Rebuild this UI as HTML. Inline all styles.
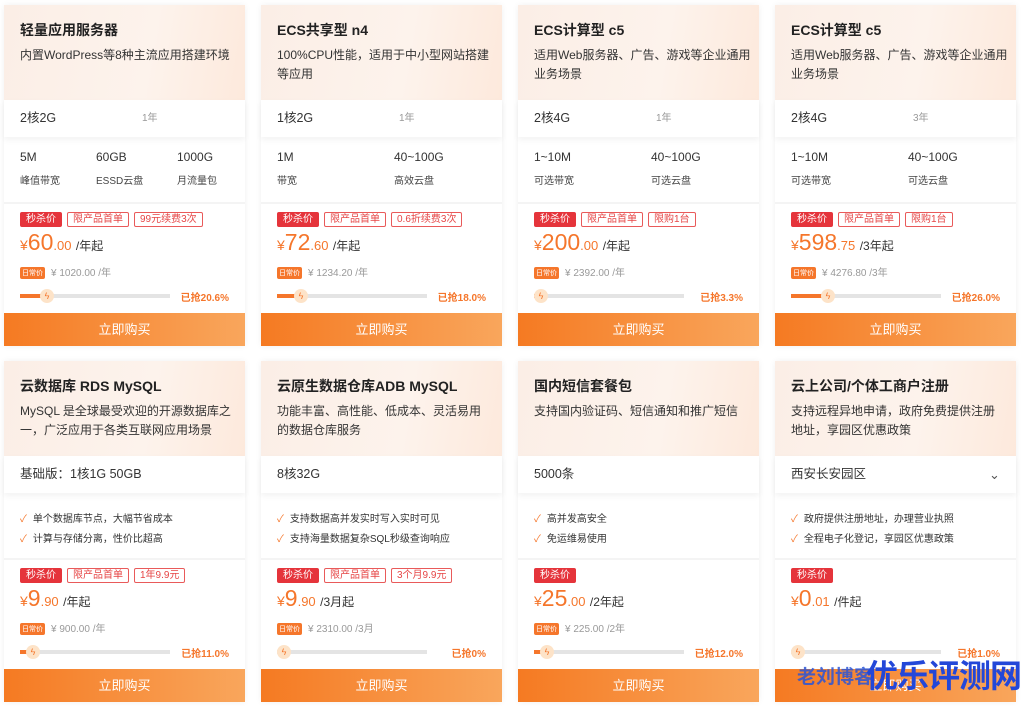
<!DOCTYPE html><html><head><meta charset="utf-8"><style>
*{margin:0;padding:0;box-sizing:border-box}
body{width:1024px;height:706px;background:#fff;font-family:"Liberation Sans","Noto Sans CJK SC",sans-serif;position:relative;overflow:hidden;color:#222}
.c{position:absolute;width:241px;height:341px;background:#fff;box-shadow:0 0 6px rgba(0,0,0,.06)}
.h{position:absolute;left:0;top:0;width:241px;height:95px;background:linear-gradient(100deg,#fbeee6 0%,#fdf3ec 60%,#fde9dc 100%)}
.t{position:absolute;left:16px;top:15px;font-size:14px;font-weight:bold;color:#222;white-space:nowrap}
.d{position:absolute;left:16px;top:41px;width:222px;font-size:12px;line-height:19px;color:#333}
.s{position:absolute;left:0;top:95px;width:241px;height:37px;background:#fff;box-shadow:0 3px 6px rgba(0,0,0,.05);font-size:12.5px;line-height:37px;padding-left:16px;color:#333}
.s i{font-style:normal;position:absolute;left:138px;font-size:10px;color:#999}
.v{position:absolute;top:145px;font-size:12px;color:#333}
.l{position:absolute;top:167px;font-size:10px;color:#444}
.ck{position:absolute;left:16px;font-size:10px;color:#333;white-space:nowrap}
.ck b{color:#f5762b;font-weight:normal;margin-right:6px}
.sep{position:absolute;left:0;top:197px;width:241px;height:2px;background:#f4f4f4}
.tg{position:absolute;top:207px;left:16px;display:flex;gap:5px}
.tg span{font-size:10px;height:15px;line-height:13px;padding:0 5px;border:1px solid #e95a5a;color:#e64545;border-radius:2px;background:#fff}
.tg span.r{background:#e5343b;color:#fff;border-color:#e5343b}
.p{position:absolute;left:16px;top:224px;color:#f5762b;white-space:nowrap}
.p .y{font-size:14px}.p .n{font-size:23px}.p .f{font-size:13px}.p .u{font-size:12px;color:#333}
.o{position:absolute;left:16px;top:259px;font-size:10px;color:#999;white-space:nowrap}
.o b{display:inline-block;background:#f5762b;color:#fff;font-size:7px;font-weight:normal;padding:1px 2px;border-radius:2px;margin-right:6px;vertical-align:1px}
.bar{position:absolute;left:16px;top:289px;width:150px;height:4px;background:#e4e4e4}
.bar em{position:absolute;left:0;top:0;height:4px;background:#f5762b}
.bar u{position:absolute;top:-5px;width:14px;height:14px;border-radius:50%;background:#fde3c8;color:#f5762b;font-size:9px;line-height:14px;text-align:center;text-decoration:none}
.pc{position:absolute;right:16px;top:284px;font-size:10px;color:#f5762b;font-weight:bold}
.btn{position:absolute;left:0;top:308px;width:241px;height:33px;background:linear-gradient(90deg,#f57a22,#f9a65c);color:#fff;font-size:13px;text-align:center;line-height:33px}
.wm{position:absolute;left:797px;top:662px;font-size:19px;color:#2a55d8;font-weight:bold;opacity:.85;white-space:nowrap}
.wm2{position:absolute;left:866px;top:656px;font-size:32px;line-height:40px;color:#2347d8;font-weight:bold;letter-spacing:-1px;white-space:nowrap}
</style></head><body>

<div class="c" style="left:4px;top:5px"><div class="h"></div><div class="t">轻量应用服务器</div><div class="d">内置WordPress等8种主流应用搭建环境</div>
<div class="s">2核2G<i>1年</i></div>
<div class="v" style="left:16px">5M</div><div class="v" style="left:92px">60GB</div><div class="v" style="left:173px">1000G</div>
<div class="l" style="left:16px">峰值带宽</div><div class="l" style="left:92px">ESSD云盘</div><div class="l" style="left:173px">月流量包</div>
<div class="sep"></div><div class="tg"><span class="r">秒杀价</span><span>限产品首单</span><span>99元续费3次</span></div>
<div class="p"><span class="y">¥</span><span class="n">60</span><span class="f">.00</span> <span class="u">/年起</span></div>
<div class="o"><b>日常价</b>¥ 1020.00 /年</div>
<div class="bar"><em style="width:20%"></em><u style="left:20px">ϟ</u></div><div class="pc">已抢20.6%</div><div class="btn">立即购买</div></div>

<div class="c" style="left:261px;top:5px"><div class="h"></div><div class="t">ECS共享型 n4</div><div class="d">100%CPU性能，适用于中小型网站搭建等应用</div>
<div class="s">1核2G<i>1年</i></div>
<div class="v" style="left:16px">1M</div><div class="v" style="left:133px">40~100G</div>
<div class="l" style="left:16px">带宽</div><div class="l" style="left:133px">高效云盘</div>
<div class="sep"></div><div class="tg"><span class="r">秒杀价</span><span>限产品首单</span><span>0.6折续费3次</span></div>
<div class="p"><span class="y">¥</span><span class="n">72</span><span class="f">.60</span> <span class="u">/年起</span></div>
<div class="o"><b>日常价</b>¥ 1234.20 /年</div>
<div class="bar"><em style="width:18%"></em><u style="left:17px">ϟ</u></div><div class="pc">已抢18.0%</div><div class="btn">立即购买</div></div>

<div class="c" style="left:518px;top:5px"><div class="h"></div><div class="t">ECS计算型 c5</div><div class="d">适用Web服务器、广告、游戏等企业通用业务场景</div>
<div class="s">2核4G<i>1年</i></div>
<div class="v" style="left:16px">1~10M</div><div class="v" style="left:133px">40~100G</div>
<div class="l" style="left:16px">可选带宽</div><div class="l" style="left:133px">可选云盘</div>
<div class="sep"></div><div class="tg"><span class="r">秒杀价</span><span>限产品首单</span><span>限购1台</span></div>
<div class="p"><span class="y">¥</span><span class="n">200</span><span class="f">.00</span> <span class="u">/年起</span></div>
<div class="o"><b>日常价</b>¥ 2392.00 /年</div>
<div class="bar"><em style="width:3%"></em><u style="left:0">ϟ</u></div><div class="pc">已抢3.3%</div><div class="btn">立即购买</div></div>

<div class="c" style="left:775px;top:5px"><div class="h"></div><div class="t">ECS计算型 c5</div><div class="d">适用Web服务器、广告、游戏等企业通用业务场景</div>
<div class="s">2核4G<i>3年</i></div>
<div class="v" style="left:16px">1~10M</div><div class="v" style="left:133px">40~100G</div>
<div class="l" style="left:16px">可选带宽</div><div class="l" style="left:133px">可选云盘</div>
<div class="sep"></div><div class="tg"><span class="r">秒杀价</span><span>限产品首单</span><span>限购1台</span></div>
<div class="p"><span class="y">¥</span><span class="n">598</span><span class="f">.75</span> <span class="u">/3年起</span></div>
<div class="o"><b>日常价</b>¥ 4276.80 /3年</div>
<div class="bar"><em style="width:26%"></em><u style="left:30px">ϟ</u></div><div class="pc">已抢26.0%</div><div class="btn">立即购买</div></div>

<div class="c" style="left:4px;top:361px"><div class="h"></div><div class="t">云数据库 RDS MySQL</div><div class="d" style="width:212px">MySQL 是全球最受欢迎的开源数据库之一，广泛应用于各类互联网应用场景</div>
<div class="s">基础版：1核1G 50GB</div>
<div class="ck" style="top:149px"><b>✓</b>单个数据库节点，大幅节省成本</div><div class="ck" style="top:169px"><b>✓</b>计算与存储分离，性价比超高</div>
<div class="sep"></div><div class="tg"><span class="r">秒杀价</span><span>限产品首单</span><span>1年9.9元</span></div>
<div class="p"><span class="y">¥</span><span class="n">9</span><span class="f">.90</span> <span class="u">/年起</span></div>
<div class="o"><b>日常价</b>¥ 900.00 /年</div>
<div class="bar"><em style="width:6%"></em><u style="left:6px">ϟ</u></div><div class="pc">已抢11.0%</div><div class="btn">立即购买</div></div>

<div class="c" style="left:261px;top:361px"><div class="h"></div><div class="t">云原生数据仓库ADB MySQL</div><div class="d" style="width:212px">功能丰富、高性能、低成本、灵活易用的数据仓库服务</div>
<div class="s">8核32G</div>
<div class="ck" style="top:149px"><b>✓</b>支持数据高并发实时写入实时可见</div><div class="ck" style="top:169px"><b>✓</b>支持海量数据复杂SQL秒级查询响应</div>
<div class="sep"></div><div class="tg"><span class="r">秒杀价</span><span>限产品首单</span><span>3个月9.9元</span></div>
<div class="p"><span class="y">¥</span><span class="n">9</span><span class="f">.90</span> <span class="u">/3月起</span></div>
<div class="o"><b>日常价</b>¥ 2310.00 /3月</div>
<div class="bar"><u style="left:0">ϟ</u></div><div class="pc">已抢0%</div><div class="btn">立即购买</div></div>

<div class="c" style="left:518px;top:361px"><div class="h"></div><div class="t">国内短信套餐包</div><div class="d">支持国内验证码、短信通知和推广短信</div>
<div class="s">5000条</div>
<div class="ck" style="top:149px"><b>✓</b>高并发高安全</div><div class="ck" style="top:169px"><b>✓</b>免运维易使用</div>
<div class="sep"></div><div class="tg"><span class="r">秒杀价</span></div>
<div class="p"><span class="y">¥</span><span class="n">25</span><span class="f">.00</span> <span class="u">/2年起</span></div>
<div class="o"><b>日常价</b>¥ 225.00 /2年</div>
<div class="bar"><em style="width:6%"></em><u style="left:6px">ϟ</u></div><div class="pc">已抢12.0%</div><div class="btn">立即购买</div></div>

<div class="c" style="left:775px;top:361px"><div class="h"></div><div class="t">云上公司/个体工商户注册</div><div class="d" style="width:212px">支持远程异地申请，政府免费提供注册地址，享园区优惠政策</div>
<div class="s">西安长安园区<i style="left:214px;font-size:13px;color:#555">⌄</i></div>
<div class="ck" style="top:149px"><b>✓</b>政府提供注册地址，办理营业执照</div><div class="ck" style="top:169px"><b>✓</b>全程电子化登记，享园区优惠政策</div>
<div class="sep"></div><div class="tg"><span class="r">秒杀价</span></div>
<div class="p"><span class="y">¥</span><span class="n">0</span><span class="f">.01</span> <span class="u">/件起</span></div>
<div class="bar"><u style="left:0">ϟ</u></div><div class="pc">已抢1.0%</div><div class="btn">立即购买</div></div>

<div class="wm">老刘博客</div><div class="wm2">优乐评测网</div>
</body></html>
